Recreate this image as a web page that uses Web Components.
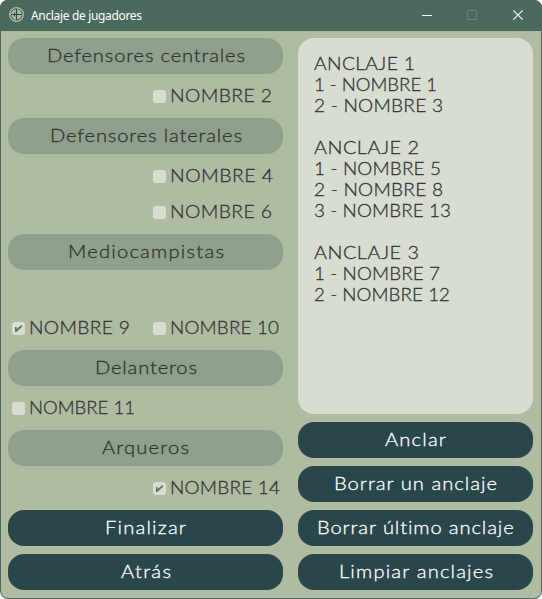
<!DOCTYPE html>
<html lang="es">
<head>
<meta charset="utf-8">
<title>Anclaje de jugadores</title>
<style>
html,body{margin:0;width:542px;height:599px;overflow:hidden;background:#fff}
</style>
</head>
<body>
<anchor-app></anchor-app>
<script>
const FONT = '"Lato Light",Lato,"Open Sans",sans-serif';

/* Spreads a label over a fixed width: wide glyphs first, then tracking. */
class FitText extends HTMLElement {
  connectedCallback() {
    const root = this.attachShadow({mode: 'open'});
    root.innerHTML = `<style>
      :host{display:inline-block;white-space:pre;text-align:left}
      span{display:inline-block;transform-origin:0 50%}
    </style><span><slot></slot></span>`;
    const span = root.querySelector('span');
    const target = Number(this.getAttribute('w'));
    const n = this.textContent.length;
    const natural = span.getBoundingClientRect().width;
    const scale = Math.min(1.09, Math.max(1, 1 + (target / natural - 1) * .6));
    const gap = (target / scale - natural) / (n - 1);
    span.style.letterSpacing = gap + 'px';
    span.style.marginRight = -gap + 'px';
    if (scale > 1) span.style.transform = `scaleX(${scale})`;
    this.style.width = target + 'px';
  }
}

class TitleBar extends HTMLElement {
  constructor() {
    super();
    this.attachShadow({mode: 'open'}).innerHTML = `<style>
      :host{display:flex;height:31px;box-sizing:border-box;align-items:center;background:#4a6a60;color:#fff;
        font:12px/16px "Noto Sans","Open Sans",sans-serif;padding-left:9px;-webkit-text-stroke:0}
      .name{margin-left:7px;flex:1}
      .logo{margin-top:-2px}
      .controls{display:flex;height:31px;margin-right:1px}
      .controls svg{display:block}
      svg{display:block}
    </style>
    <svg class="logo" width="15" height="15" viewBox="0 0 15 15"><circle cx="7.5" cy="7.5" r="7.5" fill="#b0bca2"/>
      <g fill="none" stroke="#2b4a4d"><circle cx="7.5" cy="7.5" r="5.7" stroke-width=".9" stroke-dasharray="7.1 1.85" stroke-dashoffset="-1"/>
      <path d="M7.5 1.5v12M2 7.5h11" stroke-width="1.2"/><path d="M5.5 5.5v4"/></g></svg>
    <span class="name"><slot></slot></span>
    <div class="controls">
      <svg width="46" height="31" viewBox="0 0 46 31"><path d="M18 15.5h10" stroke="#fff"/></svg>
      <svg width="46" height="31" viewBox="0 0 46 31"><rect x="17.5" y="10.5" width="9" height="9" rx=".5" fill="none" stroke="#6b867d"/></svg>
      <svg width="45" height="31" viewBox="0 0 45 31"><path d="M17.3 10.3l9.4 9.4m0-9.4l-9.4 9.4" stroke="#fff" stroke-width="1.1"/></svg>
    </div>`;
  }
}

class GroupTitle extends HTMLElement {
  constructor() {
    super();
    this.attachShadow({mode: 'open'}).innerHTML = `<style>
      :host{display:flex;justify-content:center;height:36px;line-height:35px;border-radius:16px;background:#8fa08d;color:#333}
    </style><slot></slot>`;
  }
}

class ActionButton extends HTMLElement {
  constructor() {
    super();
    this.attachShadow({mode: 'open'}).innerHTML = `<style>
      :host{display:block}
      button{display:flex;justify-content:center;width:100%;height:36px;padding:0;border:0;border-radius:16px;
        background:#29464b;color:#fff;font:inherit;line-height:35px}
    </style><button type="button"><slot></slot></button>`;
  }
}

class PlayerCheck extends HTMLElement {
  connectedCallback() {
    const mark = this.hasAttribute('checked')
      ? '<path d="M3 5h1.6v2.1L9.2 3.2h.9v1.5L4.5 10H3z" fill="#55786b"/>' : '';
    this.attachShadow({mode: 'open'}).innerHTML = `<style>
      :host{display:flex;align-items:flex-start;height:28px;line-height:27px;color:#333}
      :host([right]){grid-column:2}
      svg{display:block;margin:8px 4px 0 0}
    </style><svg width="13" height="13" viewBox="0 0 13 13"><rect width="13" height="13" rx="3" fill="#d8ddd2"/>${mark}</svg><slot></slot>`;
  }
}

class PlayerGrid extends HTMLElement {
  constructor() {
    super();
    this.attachShadow({mode: 'open'}).innerHTML = `<style>
      :host{display:grid;grid-template-columns:141px 1fr;grid-auto-rows:28px;row-gap:8px;padding-left:4px}
      :host([blank]){padding-top:36px}
    </style><slot></slot>`;
  }
}

class AnchorList extends HTMLElement {
  constructor() {
    super();
    this.attachShadow({mode: 'open'}).innerHTML = `<style>
      :host{display:flex;flex-direction:column;align-items:flex-start;flex:1;box-sizing:border-box;
        padding:15px 16px;border-radius:16px;background:#d8ddd2;color:#333;line-height:21px}
      ::slotted(*){height:21px}
    </style><slot></slot>`;
  }
}

class AnchorApp extends HTMLElement {
  constructor() {
    super();
    const t = (s, w) => `<fit-text w="${w}">${s}</fit-text>`;
    const list = [['ANCLAJE 1',101],['1 - NOMBRE 1',123],['2 - NOMBRE 3',129],null,
      ['ANCLAJE 2',105],['1 - NOMBRE 5',127],['2 - NOMBRE 8',129],['3 - NOMBRE 13',137],null,
      ['ANCLAJE 3',105],['1 - NOMBRE 7',126],['2 - NOMBRE 12',136]];
    this.attachShadow({mode: 'open'}).innerHTML = `<style>
      :host{display:block;width:542px;height:599px;box-sizing:border-box;border-radius:8px;overflow:hidden;
        background:#4a6a60;font:18.5px/21px ${FONT};-webkit-text-stroke:.3px currentColor}
      main{display:grid;grid-template-columns:275px 235px;column-gap:15px;height:567px;box-sizing:border-box;
        margin:0 1px;padding:7px 7px 8px;background:#b0bca2;border-radius:0 0 7px 7px}
      section{display:flex;flex-direction:column;gap:8px}
    </style>
    <title-bar>${t('Anclaje de jugadores',111)}</title-bar>
    <main>
      <section>
        <group-title>${t('Defensores centrales',198)}</group-title>
        <player-grid><player-check right>${t('NOMBRE 2',102)}</player-check></player-grid>
        <group-title>${t('Defensores laterales',192)}</group-title>
        <player-grid><player-check right>${t('NOMBRE 4',103)}</player-check><player-check right>${t('NOMBRE 6',102)}</player-check></player-grid>
        <group-title>${t('Mediocampistas',156)}</group-title>
        <player-grid blank><player-check checked>${t('NOMBRE 9',101)}</player-check><player-check>${t('NOMBRE 10',109)}</player-check></player-grid>
        <group-title>${t('Delanteros',102)}</group-title>
        <player-grid><player-check>${t('NOMBRE 11',106)}</player-check></player-grid>
        <group-title>${t('Arqueros',87)}</group-title>
        <player-grid><player-check right checked>${t('NOMBRE 14',110)}</player-check></player-grid>
        <action-button>${t('Finalizar',81)}</action-button>
        <action-button>${t('Atrás',50)}</action-button>
      </section>
      <section>
        <anchor-list>${list.map(r => r ? t(r[0], r[1]) : '<div></div>').join('')}</anchor-list>
        <action-button>${t('Anclar',61)}</action-button>
        <action-button>${t('Borrar un anclaje',163)}</action-button>
        <action-button>${t('Borrar último anclaje',197)}</action-button>
        <action-button>${t('Limpiar anclajes',154)}</action-button>
      </section>
    </main>`;
  }
}

customElements.define('title-bar', TitleBar);
customElements.define('group-title', GroupTitle);
customElements.define('action-button', ActionButton);
customElements.define('player-check', PlayerCheck);
customElements.define('player-grid', PlayerGrid);
customElements.define('anchor-list', AnchorList);
customElements.define('anchor-app', AnchorApp);
customElements.define('fit-text', FitText);
</script>
</body>
</html>
